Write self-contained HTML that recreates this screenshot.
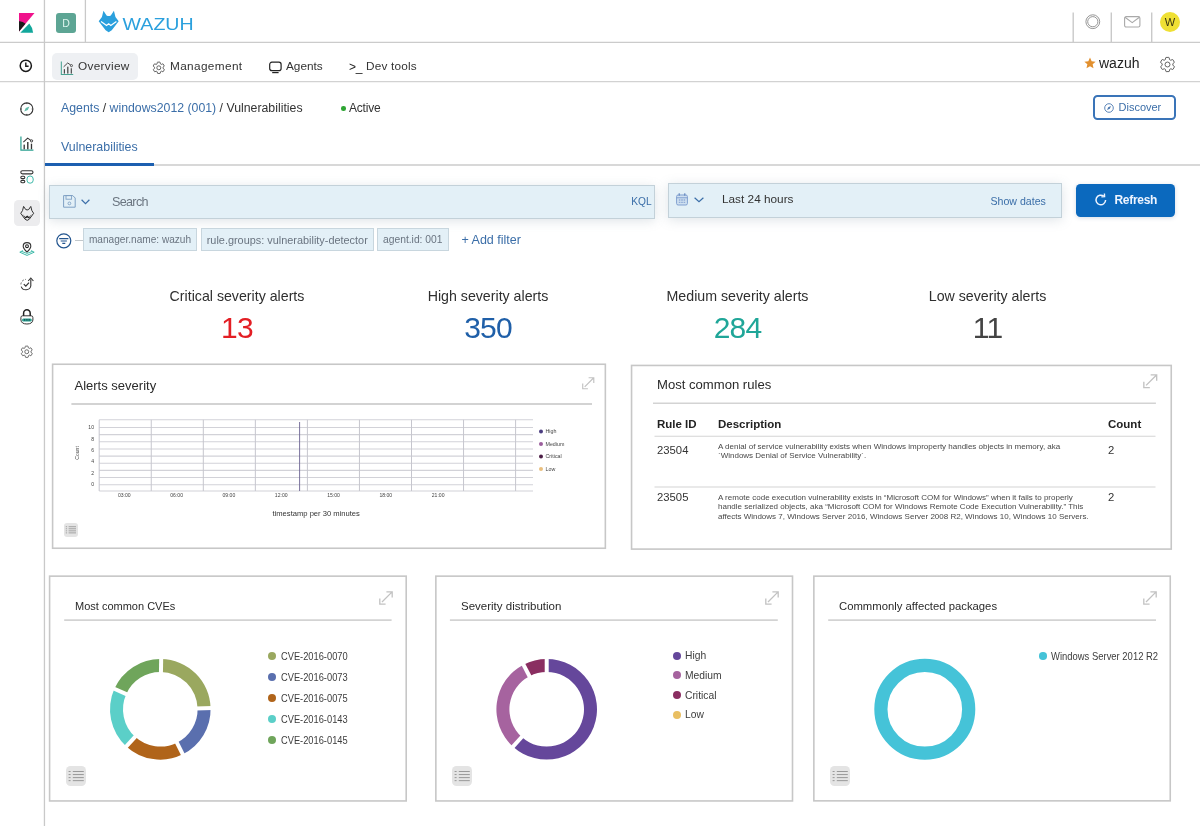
<!DOCTYPE html>
<html lang="en">
<head>
<meta charset="utf-8">
<title>Wazuh - Vulnerabilities</title>
<style>
*{box-sizing:border-box;margin:0;padding:0}
html,body{width:1200px;height:826px;overflow:hidden;background:#fff}
body{position:relative;will-change:transform;font-family:"Liberation Sans",sans-serif;color:#343741;font-size:13px}
.a{position:absolute;white-space:nowrap;line-height:1}
.ln{position:absolute;background:#d3d3d3}
svg{position:absolute;overflow:visible}
.blue{color:#3b6ea8}
.panel{position:absolute;border:2px solid #d6d6d6;background:transparent}
.ptitle{position:absolute;white-space:nowrap;line-height:1;color:#2a2a2a}
.pill{position:absolute;height:23px;top:228px;background:#e3f0f7;border:1px solid #c8d6de;color:#6a7480;font-size:10.300px;line-height:22px;white-space:nowrap;text-align:center}
.stat-l{position:absolute;width:250px;text-align:center;top:288.800px;font-size:14.200px;line-height:1;color:#2f2f2f;white-space:nowrap}
.stat-n{position:absolute;width:250px;text-align:center;top:313px;font-size:30px;letter-spacing:-0.800px;line-height:1;white-space:nowrap}
.lg{position:absolute;white-space:nowrap;line-height:1;color:#3d3d3d}
.dot{position:absolute;border-radius:50%}
</style>
</head>
<body>

<!-- ===== frame lines ===== -->
<svg style="left:0;top:0" width="1200" height="826" viewBox="0 0 1200 826">
<line x1="0" y1="42.400" x2="1200" y2="42.400" stroke="#cbcbcb" stroke-width="1.300"/>
<line x1="0" y1="81.700" x2="1200" y2="81.700" stroke="#d2d2d2" stroke-width="1.300"/>
<line x1="44.450" y1="0" x2="44.450" y2="826" stroke="#c9c9c9" stroke-width="1.300"/>
<line x1="85.400" y1="0" x2="85.400" y2="42" stroke="#c9c9c9" stroke-width="1.300"/>
<line x1="1073.200" y1="12.600" x2="1073.200" y2="42" stroke="#c9c9c9" stroke-width="1.400"/>
<line x1="1111.300" y1="12.600" x2="1111.300" y2="42" stroke="#c9c9c9" stroke-width="1.400"/>
<line x1="1151.700" y1="12.600" x2="1151.700" y2="42" stroke="#c9c9c9" stroke-width="1.400"/>
</svg>

<!-- ===== top bar ===== -->
<!-- kibana logo -->
<svg style="left:18.900px;top:13px" width="15.500" height="19.800" viewBox="0 0 15.5 19.8">
  <polygon points="0,0 15.500,0 0,18.400" fill="#f0128c"/>
  <path d="M0,8.200 Q3.600,7.900 6.500,10.700 L0,18.400 Z" fill="#1b1b1b"/>
  <path d="M1.300,19.700 L14.100,19.700 Q13.600,14.600 10.300,10.600 Z" fill="#12a79b"/>
</svg>
<!-- D badge -->
<div class="a" style="left:56px;top:13px;width:20px;height:19.5px;background:#5da594;border-radius:3px;color:#def5ee;font-size:10.500px;text-align:center;line-height:20px">D</div>
<!-- wazuh logo -->
<svg style="left:98.7px;top:11.2px" width="96" height="22" viewBox="0 0 96 22">
  <g transform="translate(-0.300,-0.300) scale(1.035)"><path d="M4.6,0 L7.6,4.6 Q9.65,5.6 11.7,4.6 L14.7,0 L16.2,6.2 L19.3,10.3 L12.6,19 L9.65,20.8 L6.7,19 L0,10.3 L3.1,6.2 Z" fill="#2ba0dd"/>
  <polyline points="2.200,10.400 7.600,14.300 9.650,12.700 11.700,14.300 17.100,10.400" fill="none" stroke="#fff" stroke-width="1.150" stroke-linejoin="miter"/></g>
  <text x="23.600" y="18.600" font-family="Liberation Sans, sans-serif" font-size="16.2" fill="#2ba0dd" textLength="71" lengthAdjust="spacingAndGlyphs">WAZUH</text>
</svg>

<!-- right icons -->
<svg style="left:1084.5px;top:14px" width="16" height="16" viewBox="0 0 16 16"><circle cx="7.8" cy="7.7" r="6.9" fill="none" stroke="#8a8a8a" stroke-width="0.9"/><circle cx="7.8" cy="7.7" r="5.1" fill="none" stroke="#8a8a8a" stroke-width="0.9"/></svg>
<svg style="left:1124px;top:16px" width="17" height="12" viewBox="0 0 17 12"><rect x="0.6" y="0.6" width="15.3" height="10.4" rx="1.6" fill="none" stroke="#a9a9a9" stroke-width="1.1"/><polyline points="1,1.2 8.2,6.6 15.4,1.2" fill="none" stroke="#a9a9a9" stroke-width="1.1"/></svg>
<div class="a" style="left:1160px;top:11.7px;width:20px;height:20px;border-radius:50%;background:#efe034;color:#3a3510;font-size:11px;text-align:center;line-height:20.500px">W</div>

<!-- ===== nav bar ===== -->
<svg style="left:19px;top:59px" width="14" height="14" viewBox="0 0 14 14"><circle cx="6.8" cy="6.8" r="5.6" fill="none" stroke="#1a1a1a" stroke-width="1.5"/><polyline points="6.8,3.6 6.8,7.2 9.6,7.2" fill="none" stroke="#1a1a1a" stroke-width="1.4"/></svg>
<div class="a" style="left:51.600px;top:52.800px;width:86px;height:27px;background:#eef0f3;border-radius:5px"></div>
<svg style="left:59.800px;top:60.500px" width="14.200" height="14.200" viewBox="0 0 15 16">
  <path d="M1,0.5 V15.2 H14.4" fill="none" stroke="#4aa392" stroke-width="1.2"/>
  <path d="M3.6,6.6 L8.2,2.2 L11.6,4.6" fill="none" stroke="#444" stroke-width="1.1"/>
  <circle cx="12.4" cy="5.2" r="1.2" fill="none" stroke="#444" stroke-width="1"/>
  <rect x="3.8" y="9.2" width="1.3" height="5" fill="#444"/><rect x="7.6" y="6.4" width="1.4" height="7.8" fill="#444"/><rect x="11.6" y="8.2" width="1.3" height="6" fill="#444"/>
</svg>
<div class="a" style="left:78px;top:61px;font-size:11.800px;letter-spacing:0.300px;color:#333">Overview</div>
<svg style="left:151.600px;top:60.800px" width="13.600" height="13.600" viewBox="0 0 24 24"><path d="M12 15.5A3.5 3.5 0 1 0 12 8.5a3.5 3.5 0 0 0 0 7zm7.4-2.5c.1-.3.1-.7.1-1s0-.7-.1-1l2.100-1.700c.2-.2.2-.4.100-.6l-2-3.500c-.1-.2-.400-.3-.600-.2l-2.500 1a7.300 7.300 0 0 0-1.700-1l-.400-2.600c0-.2-.200-.4-.500-.4h-4c-.200 0-.500.200-.500.400l-.400 2.600c-.600.300-1.200.600-1.700 1l-2.500-1c-.200-.1-.500 0-.600.200l-2 3.500c-.1.200-.1.500.100.600L4.600 11c0 .3-.100.700-.100 1s0 .7.100 1l-2.100 1.700c-.2.200-.2.400-.100.600l2 3.500c.1.200.400.300.600.200l2.500-1c.5.400 1.100.700 1.700 1l.4 2.600c0 .2.200.4.500.4h4c.2 0 .5-.2.500-.4l.4-2.600c.6-.3 1.200-.6 1.700-1l2.500 1c.2.100.5 0 .6-.2l2-3.500c.1-.2.100-.5-.1-.6L19.400 13z" fill="none" stroke="#555" stroke-width="1.6"/></svg>
<div class="a" style="left:170px;top:61px;font-size:11.800px;letter-spacing:0.360px;color:#333">Management</div>
<svg style="left:269px;top:61px" width="13" height="13" viewBox="0 0 13 13"><rect x="0.7" y="1.2" width="11.4" height="8.4" rx="2.2" fill="none" stroke="#222" stroke-width="1.2"/><line x1="3.2" y1="11.6" x2="9.6" y2="11.6" stroke="#222" stroke-width="1.2"/></svg>
<div class="a" style="left:286px;top:61px;font-size:11.800px;color:#333">Agents</div>
<div class="a" style="left:349px;top:61px;font-size:12px;letter-spacing:-0.300px;color:#222">&gt;_</div>
<div class="a" style="left:366px;top:60.500px;font-size:11.800px;letter-spacing:0.180px;color:#333">Dev tools</div>

<svg style="left:1084px;top:56.5px" width="12" height="12" viewBox="0 0 24 24"><path d="M12 1.200l3.300 7.300 8 .8-6 5.400 1.700 7.900L12 18.500 5 22.600l1.700-7.900-6-5.400 8-.8z" fill="#e2902f"/></svg>
<div class="a" style="left:1099px;top:55.5px;font-size:14px;color:#222">wazuh</div>
<svg style="left:1159px;top:55.5px" width="17" height="17" viewBox="0 0 24 24"><path d="M12 15.500A3.500 3.500 0 1 0 12 8.500a3.500 3.500 0 0 0 0 7zm7.400-2.500c.1-.3.100-.7.100-1s0-.7-.1-1l2.100-1.700c.2-.2.200-.4.100-.6l-2-3.500c-.1-.2-.4-.3-.6-.2l-2.500 1a7.300 7.300 0 0 0-1.700-1l-.4-2.600c0-.2-.2-.4-.5-.4h-4c-.2 0-.5.200-.5.400l-.4 2.600c-.6.300-1.200.6-1.700 1l-2.500-1c-.2-.1-.5 0-.6.200l-2 3.500c-.1.200-.1.500.1.600L4.600 11c0 .3-.1.700-.1 1s0 .7.100 1l-2.100 1.700c-.2.200-.2.400-.1.600l2 3.500c.1.200.4.300.6.200l2.500-1c.5.400 1.100.7 1.700 1l.4 2.600c0 .2.200.4.500.4h4c.2 0 .5-.2.500-.4l.4-2.600c.6-.3 1.200-.6 1.700-1l2.500 1c.2.100.5 0 .6-.2l2-3.500c.1-.2.100-.5-.1-.6L19.400 13z" fill="none" stroke="#555" stroke-width="1.3"/></svg>


<!-- ===== sidebar icons ===== -->
<!-- compass -->
<svg style="left:20px;top:102px" width="14" height="14" viewBox="0 0 14 14"><circle cx="6.8" cy="7" r="6.1" fill="none" stroke="#333" stroke-width="1.1"/><path d="M9.400,4.400 L7.800,8 L4.200,9.600 L5.800,6 Z" fill="#63bba9"/><path d="M6.8,0.9v1.2M6.8,11.9v1.2M0.700,7h1.200M11.700,7h1.200" stroke="#333" stroke-width="0.9"/></svg>
<!-- visualize -->
<svg style="left:20px;top:136px" width="14" height="15" viewBox="0 0 15 16">
  <path d="M1,0.5 V15.2 H14.4" fill="none" stroke="#2aa090" stroke-width="1.3"/>
  <path d="M3.6,6.6 L8.2,2.2 L11.6,4.6" fill="none" stroke="#333" stroke-width="1.1"/>
  <circle cx="12.4" cy="5.2" r="1.2" fill="none" stroke="#333" stroke-width="1"/>
  <rect x="3.8" y="9.2" width="1.4" height="5" fill="#333"/><rect x="7.600" y="6.400" width="1.500" height="7.800" fill="#333"/><rect x="11.600" y="8.200" width="1.400" height="6" fill="#333"/>
</svg>
<!-- dashboard -->
<svg style="left:20px;top:170px" width="14" height="14" viewBox="0 0 14 14"><rect x="0.8" y="0.7" width="12.2" height="3.2" rx="1.6" fill="none" stroke="#333" stroke-width="1.1"/><rect x="0.8" y="6.2" width="4" height="2.4" rx="1.2" fill="none" stroke="#333" stroke-width="1.1"/><rect x="0.8" y="10.4" width="4" height="2.400" rx="1.200" fill="none" stroke="#333" stroke-width="1.100"/><rect x="7" y="6" width="6.2" height="7.2" rx="3" fill="none" stroke="#35b5a4" stroke-width="0.950"/></svg>
<!-- wazuh selected -->
<div class="a" style="left:14px;top:200px;width:26px;height:26px;background:#ececee;border-radius:4.500px"></div>
<svg style="left:20.300px;top:206.400px" width="14.400" height="14.800" viewBox="0 0 19.3 20.8"><path d="M4.6,0.600 L7.6,5 Q9.650,6 11.700,5 L14.700,0.600 L16.200,6.400 L18.700,10.300 L12.600,18.600 L9.650,20.200 L6.700,18.600 L0.600,10.300 L3.100,6.400 Z" fill="none" stroke="#222" stroke-width="1.3" stroke-linejoin="round"/><path d="M3.500,11.500 L7,15.500 L9.650,13.300 L12.300,15.500 L15.800,11.500 L12.300,17.500 L9.650,16 L7,17.500 Z" fill="#222"/></svg>
<!-- maps -->
<svg style="left:19px;top:241.500px" width="16" height="14.500" viewBox="0 0 16 14.5"><path d="M8,0.600 C5.600,0.600 4.200,2.300 4.200,4.200 C4.200,6.400 8,10 8,10 C8,10 11.800,6.400 11.800,4.200 C11.800,2.300 10.400,0.600 8,0.600 Z" fill="none" stroke="#333" stroke-width="1.1"/><circle cx="8" cy="4.200" r="1.400" fill="none" stroke="#222" stroke-width="1.100"/><path d="M4,8.600 L0.800,10.200 L8,13.400 L15.200,10.200 L12,8.600" fill="none" stroke="#35b5a4" stroke-width="0.950"/><path d="M0.800,12 L8,14.300 L15.200,12" fill="none" stroke="#2aa090" stroke-width="0"/><path d="M2.600,9.400 L8,11.400 L13.400,9.400" fill="none" stroke="#35b5a4" stroke-width="0.900"/></svg>
<!-- uptime -->
<svg style="left:20px;top:276px" width="14" height="14.500" viewBox="0 0 14 14.5"><path d="M10.800,3.200 V10 A5,4.800 0 0 1 1.200,10.600" fill="none" stroke="#333" stroke-width="1.1"/><path d="M8.200,5 L10.800,2 L13.400,5" fill="none" stroke="#333" stroke-width="1.100"/><path d="M0.900,8.400 A5.200,5.200 0 0 1 6,3.400" fill="none" stroke="#666" stroke-width="1" stroke-dasharray="2 1.400"/><path d="M3.800,8.200 L5.800,10.200 L9,6.600" fill="none" stroke="#333" stroke-width="1.200"/></svg>
<!-- security -->
<svg style="left:20px;top:309px" width="14" height="16" viewBox="0 0 14 16"><path d="M3.600,7 V4.200 A3.300,3.400 0 0 1 10.200,4.200 V7" fill="none" stroke="#222" stroke-width="1.500"/><path d="M0.900,8.600 Q0.900,6.800 2.600,6.800 H11.200 Q12.900,6.800 12.900,8.600 V11 Q12.400,15 6.900,15 Q1.400,15 0.900,11 Z" fill="none" stroke="#333" stroke-width="1"/><rect x="2" y="9.400" width="9.800" height="3" rx="1.500" fill="#2aa090"/><path d="M4,10.900h1.200M6.300,10.900h1.200M8.600,10.900h1.200" stroke="#123" stroke-width="1"/></svg>
<!-- management -->
<svg style="left:19.500px;top:344.500px" width="13.500" height="13.500" viewBox="0 0 24 24"><path d="M12 15.500A3.500 3.500 0 1 0 12 8.500a3.500 3.500 0 0 0 0 7zm7.400-2.500c.1-.3.100-.7.100-1s0-.7-.1-1l2.100-1.700c.2-.2.200-.4.100-.6l-2-3.500c-.1-.2-.4-.3-.6-.2l-2.500 1a7.300 7.300 0 0 0-1.700-1l-.4-2.600c0-.2-.2-.4-.5-.4h-4c-.2 0-.5.200-.5.400l-.4 2.600c-.6.300-1.200.6-1.700 1l-2.500-1c-.2-.1-.5 0-.6.200l-2 3.500c-.1.200-.1.500.1.600L4.600 11c0 .3-.1.700-.1 1s0 .7.100 1l-2.100 1.700c-.2.200-.2.400-.1.600l2 3.500c.1.200.4.300.6.200l2.500-1c.5.400 1.100.7 1.700 1l.4 2.600c0 .2.200.4.500.4h4c.2 0 .5-.2.500-.4l.4-2.600c.6-.3 1.200-.6 1.700-1l2.500 1c.2.100.5 0 .6-.2l2-3.500c.1-.2.100-.5-.1-.6L19.400 13z" fill="none" stroke="#555" stroke-width="1.500"/></svg>



<!-- ===== breadcrumb ===== -->
<div class="a" style="left:61px;top:101.500px;font-size:12.300px;color:#333"><span class="blue">Agents</span> / <span class="blue">windows2012 (001)</span> / Vulnerabilities</div>
<div class="dot" style="left:341px;top:106px;width:4.500px;height:4.500px;background:#2fa534"></div>
<div class="a" style="left:349px;top:101.500px;font-size:12px;letter-spacing:-0.200px;color:#333">Active</div>
<!-- discover button -->
<div class="a" style="left:1093px;top:94.500px;width:83px;height:25.500px;border:2px solid #3a74b8;border-radius:4.500px;background:#fff"></div>
<svg style="left:1103.500px;top:102.500px" width="10" height="10" viewBox="0 0 10 10"><circle cx="5" cy="5" r="4.300" fill="none" stroke="#4a78b0" stroke-width="0.900"/><path d="M7,3 L5.800,5.800 L3,7 L4.200,4.200 Z" fill="#4a78b0"/></svg>
<div class="a" style="left:1118.500px;top:102px;font-size:11px;color:#3b6ea8">Discover</div>

<!-- ===== tabs ===== -->
<div class="a" style="left:61px;top:140.500px;font-size:12.400px;color:#3b6ea8">Vulnerabilities</div>
<div class="ln" style="left:45px;top:164px;width:1155px;height:2px;background:#d8d8d8"></div>
<div class="ln" style="left:45px;top:162.500px;width:109px;height:3.200px;background:#1c5fb0"></div>

<!-- ===== search bar ===== -->
<div class="a" style="left:49px;top:185px;width:606px;height:34px;background:#e3f0f7;border:1px solid #c3d1d9;box-shadow:0 2px 11px rgba(110,130,150,.22)"></div>
<svg style="left:62.500px;top:194.500px" width="13" height="13" viewBox="0 0 13 13"><path d="M0.600,0.600 H9.800 L12.200,3 V12.200 H0.600 Z" fill="none" stroke="#7ea0c4" stroke-width="1"/><rect x="3" y="0.600" width="5.600" height="3.600" fill="none" stroke="#7ea0c4" stroke-width="0.900"/><circle cx="6.400" cy="8.400" r="1.400" fill="none" stroke="#7ea0c4" stroke-width="0.900"/></svg>
<svg style="left:80.500px;top:198.500px" width="9" height="6" viewBox="0 0 9 6"><polyline points="0.600,0.800 4.500,4.600 8.400,0.800" fill="none" stroke="#3b6ea8" stroke-width="1.200"/></svg>
<div class="a" style="left:112px;top:195.800px;font-size:12.600px;letter-spacing:-0.680px;color:#6b7580">Search</div>
<div class="a" style="left:631.300px;top:196.600px;font-size:10.200px;color:#3b6ea8">KQL</div>

<!-- date picker -->
<div class="a" style="left:667.500px;top:183px;width:394px;height:34.500px;background:#e3f0f7;border:1px solid #c3d1d9;box-shadow:0 2px 11px rgba(110,130,150,.22)"></div>
<svg style="left:676px;top:193.300px" width="12" height="12.700" viewBox="0 0 12 12.700"><rect x="0.600" y="2" width="10.800" height="10" rx="1.500" fill="#cfe0f0" stroke="#7f9fd0" stroke-width="1"/><path d="M0.600,4.800H11.400" stroke="#7f9fd0" stroke-width="1"/><path d="M3.200,0.300V2.800M8.800,0.300V2.800" stroke="#5f83bd" stroke-width="1.100"/><path d="M2.800,7h6.400M2.800,9.400h6.400" stroke="#8fabd6" stroke-width="1.300" stroke-dasharray="1.600 0.800"/></svg>
<svg style="left:693.500px;top:197px" width="10" height="6" viewBox="0 0 10 6"><polyline points="0.600,0.800 5,4.800 9.400,0.800" fill="none" stroke="#3b6ea8" stroke-width="1.200"/></svg>
<div class="a" style="left:722px;top:193.500px;font-size:11.800px;color:#333">Last 24 hours</div>
<div class="a" style="left:990.500px;top:195.500px;font-size:10.600px;color:#3b6ea8">Show dates</div>

<!-- refresh button -->
<div class="a" style="left:1076px;top:183.500px;width:99px;height:33.500px;background:#0b69be;border-radius:4.500px;box-shadow:0 1px 4px rgba(20,60,120,.18)"></div>
<svg style="left:1095px;top:194px" width="12" height="12" viewBox="0 0 12 12"><path d="M10.600,6 A4.800,4.800 0 1 1 8.800,2.200" fill="none" stroke="#eef4ff" stroke-width="1.500"/><polyline points="6.400,2.900 9.600,2.700 9.400,-0.500" fill="none" stroke="#eef4ff" stroke-width="1.400"/></svg>
<div class="a" style="left:1114.500px;top:193.500px;font-size:12px;color:#eef4ff;font-weight:bold;letter-spacing:-0.300px">Refresh</div>

<!-- ===== filters ===== -->
<svg style="left:56px;top:232.500px" width="16" height="16" viewBox="0 0 16 16"><circle cx="7.800" cy="7.800" r="7" fill="none" stroke="#23558f" stroke-width="1.200"/><path d="M3.200,5.600h9.200M4.700,8h6.200M6.300,10.400h3" stroke="#23558f" stroke-width="1.200"/></svg>
<div class="ln" style="left:74.500px;top:239.500px;width:9px;height:1px;background:#c2c8cc"></div>
<div class="pill" style="left:83px;width:114px;font-size:10.100px">manager.name: wazuh</div>
<div class="pill" style="left:200.500px;width:173.500px;font-size:10.900px">rule.groups: vulnerability-detector</div>
<div class="pill" style="left:377px;width:71.500px">agent.id: 001</div>
<div class="a" style="left:461.500px;top:233.500px;font-size:12.500px;color:#3b6ea8">+ Add filter</div>

<!-- ===== stats ===== -->
<div class="stat-l" style="left:112px">Critical severity alerts</div>
<div class="stat-n" style="left:112px;color:#e31e24">13</div>
<div class="stat-l" style="left:363px">High severity alerts</div>
<div class="stat-n" style="left:363px;color:#1f5fa8">350</div>
<div class="stat-l" style="left:612.500px">Medium severity alerts</div>
<div class="stat-n" style="left:612.500px;color:#1fa698">284</div>
<div class="stat-l" style="left:862.500px">Low severity alerts</div>
<div class="stat-n" style="left:862.500px;color:#444">11</div>


<!-- ===== panel frames ===== -->
<svg style="left:0;top:0" width="1200" height="826" viewBox="0 0 1200 826">
<rect x="52.6" y="364.25" width="552.75" height="184.00" fill="none" stroke="#c7c7c7" stroke-width="1.6"/>
<rect x="631.55" y="365.45" width="539.70" height="183.65" fill="none" stroke="#c7c7c7" stroke-width="1.6"/>
<rect x="49.6" y="576.15" width="356.60" height="224.80" fill="none" stroke="#c7c7c7" stroke-width="1.6"/>
<rect x="435.85" y="576.15" width="356.65" height="224.80" fill="none" stroke="#c7c7c7" stroke-width="1.6"/>
<rect x="813.85" y="576.15" width="356.40" height="224.70" fill="none" stroke="#c7c7c7" stroke-width="1.6"/>
<line x1="71.4" y1="404" x2="592" y2="404" stroke="#d3d3d3" stroke-width="2.0"/>
<line x1="653" y1="403.25" x2="1155.9" y2="403.25" stroke="#d3d3d3" stroke-width="1.6"/>
<line x1="64.2" y1="620.15" x2="391.6" y2="620.15" stroke="#d3d3d3" stroke-width="1.7"/>
<line x1="449.9" y1="620.15" x2="777.8" y2="620.15" stroke="#d3d3d3" stroke-width="1.7"/>
<line x1="828.2" y1="620.15" x2="1156" y2="620.15" stroke="#d3d3d3" stroke-width="1.7"/>
<line x1="654.500" y1="436.200" x2="1155.500" y2="436.200" stroke="#d4d4d4" stroke-width="1.100"/>
<line x1="654.500" y1="487" x2="1155.500" y2="487" stroke="#d4d4d4" stroke-width="1.100"/>
</svg>
<!-- ===== Alerts severity panel ===== -->
<div class="ptitle" style="left:74.500px;top:379px;font-size:13px">Alerts severity</div>
<svg style="left:581.5px;top:377px" width="12.5" height="12.5" viewBox="0 0 14 14"><path d="M3,11 L12.600,1.400 M7.400,0.800 H13.200 V6.600 M0.800,7.400 V13.200 H6.600" fill="none" stroke="#c2c2c2" stroke-width="1.300"/></svg>
<div class="a" style="left:64px;top:523px;width:13.500px;height:13.500px;background:#e4e4e4;border-radius:3px"></div><svg style="left:64px;top:523px" width="13.500" height="13.500" viewBox="0 0 20 20"><path d="M2.600,5.500h2M2.600,8.550h2M2.600,11.600h2M2.600,14.650h2M6.800,5.500h11M6.800,8.550h11M6.800,11.600h11M6.800,14.650h11" stroke="#999" stroke-width="1.300"/></svg>
<svg style="left:0;top:0" width="1200" height="826" viewBox="0 0 1200 826" font-family="Liberation Sans, sans-serif">
<line x1="99.2" y1="419.80" x2="533" y2="419.80" stroke="#d2d2d8" stroke-width="1.100"/>
<line x1="99.2" y1="427.50" x2="533" y2="427.50" stroke="#d2d2d8" stroke-width="1.100"/>
<line x1="99.2" y1="434.65" x2="533" y2="434.65" stroke="#d2d2d8" stroke-width="1.100"/>
<line x1="99.2" y1="441.80" x2="533" y2="441.80" stroke="#d2d2d8" stroke-width="1.100"/>
<line x1="99.2" y1="448.95" x2="533" y2="448.95" stroke="#d2d2d8" stroke-width="1.100"/>
<line x1="99.2" y1="456.10" x2="533" y2="456.10" stroke="#d2d2d8" stroke-width="1.100"/>
<line x1="99.2" y1="463.25" x2="533" y2="463.25" stroke="#d2d2d8" stroke-width="1.100"/>
<line x1="99.2" y1="470.40" x2="533" y2="470.40" stroke="#d2d2d8" stroke-width="1.100"/>
<line x1="99.2" y1="477.55" x2="533" y2="477.55" stroke="#d2d2d8" stroke-width="1.100"/>
<line x1="99.2" y1="484.70" x2="533" y2="484.70" stroke="#d2d2d8" stroke-width="1.100"/>
<line x1="99.2" y1="491.00" x2="533" y2="491.00" stroke="#d2d2d8" stroke-width="1.100"/>
<line x1="99.20" y1="419.800" x2="99.20" y2="491" stroke="#c6c6ce" stroke-width="1"/>
<line x1="151.25" y1="419.800" x2="151.25" y2="491" stroke="#c6c6ce" stroke-width="1"/>
<line x1="203.30" y1="419.800" x2="203.30" y2="491" stroke="#c6c6ce" stroke-width="1"/>
<line x1="255.35" y1="419.800" x2="255.35" y2="491" stroke="#c6c6ce" stroke-width="1"/>
<line x1="307.40" y1="419.800" x2="307.40" y2="491" stroke="#c6c6ce" stroke-width="1"/>
<line x1="359.45" y1="419.800" x2="359.45" y2="491" stroke="#c6c6ce" stroke-width="1"/>
<line x1="411.50" y1="419.800" x2="411.50" y2="491" stroke="#c6c6ce" stroke-width="1"/>
<line x1="463.55" y1="419.800" x2="463.55" y2="491" stroke="#c6c6ce" stroke-width="1"/>
<line x1="515.60" y1="419.800" x2="515.60" y2="491" stroke="#c6c6ce" stroke-width="1"/>
<line x1="299.600" y1="422" x2="299.600" y2="491" stroke="#6a6292" stroke-width="0.900"/>
<text x="94" y="429.10" text-anchor="end" font-size="5.100" fill="#444">10</text>
<text x="94" y="440.54" text-anchor="end" font-size="5.100" fill="#444">8</text>
<text x="94" y="451.98" text-anchor="end" font-size="5.100" fill="#444">6</text>
<text x="94" y="463.42" text-anchor="end" font-size="5.100" fill="#444">4</text>
<text x="94" y="474.86" text-anchor="end" font-size="5.100" fill="#444">2</text>
<text x="94" y="486.30" text-anchor="end" font-size="5.100" fill="#444">0</text>
<text x="124.30" y="497.300" text-anchor="middle" font-size="5.100" fill="#444">03:00</text>
<text x="176.60" y="497.300" text-anchor="middle" font-size="5.100" fill="#444">06:00</text>
<text x="228.90" y="497.300" text-anchor="middle" font-size="5.100" fill="#444">09:00</text>
<text x="281.20" y="497.300" text-anchor="middle" font-size="5.100" fill="#444">12:00</text>
<text x="333.50" y="497.300" text-anchor="middle" font-size="5.100" fill="#444">15:00</text>
<text x="385.80" y="497.300" text-anchor="middle" font-size="5.100" fill="#444">18:00</text>
<text x="438.10" y="497.300" text-anchor="middle" font-size="5.100" fill="#444">21:00</text>
<text transform="translate(79,453) rotate(-90)" text-anchor="middle" font-size="5.100" fill="#444">Count</text>
<circle cx="541" cy="431.500" r="2" fill="#4b3d80"/><text x="545.500" y="433.100" font-size="5.300" fill="#444">High</text>
<circle cx="541" cy="444" r="2" fill="#9b5e9c"/><text x="545.500" y="445.600" font-size="5.300" fill="#444">Medium</text>
<circle cx="541" cy="456.500" r="2" fill="#4c1e46"/><text x="545.500" y="458.100" font-size="5.300" fill="#444">Critical</text>
<circle cx="541" cy="469" r="2" fill="#e9bf7e"/><text x="545.500" y="470.600" font-size="5.300" fill="#444">Low</text>
<text x="316.200" y="516" text-anchor="middle" font-size="7.600" fill="#333">timestamp per 30 minutes</text>
</svg>

<!-- ===== Most common rules panel ===== -->
<div class="ptitle" style="left:657px;top:378px;font-size:13.100px">Most common rules</div>
<svg style="left:1143px;top:374px" width="14.5" height="14.5" viewBox="0 0 14 14"><path d="M3,11 L12.600,1.400 M7.400,0.800 H13.200 V6.600 M0.800,7.400 V13.200 H6.600" fill="none" stroke="#c2c2c2" stroke-width="1.300"/></svg>
<div class="a" style="left:657px;top:418.500px;font-size:11.500px;font-weight:bold;color:#222">Rule ID</div>
<div class="a" style="left:718px;top:418.500px;font-size:11.500px;font-weight:bold;color:#222">Description</div>
<div class="a" style="left:1108px;top:418.500px;font-size:11.500px;font-weight:bold;color:#222">Count</div>
<div class="a" style="left:657px;top:444.500px;font-size:11.300px;color:#333">23504</div>
<div class="a" style="left:718px;top:441.500px;font-size:8px;line-height:9.800px;color:#484848;white-space:nowrap;width:400px">A denial of service vulnerability exists when Windows improperty handles objects in memory, aka<br>`Windows Denial of Service Vulnerability´.</div>
<div class="a" style="left:1108px;top:444.500px;font-size:11.300px;color:#333">2</div>
<div class="a" style="left:657px;top:491.500px;font-size:11.300px;color:#333">23505</div>
<div class="a" style="left:718px;top:492.500px;font-size:8px;line-height:9.800px;color:#484848;white-space:nowrap;width:400px">A remote code execution vulnerability exists in “Microsoft COM for Windows” when it fails to properly<br>handle serialized objects, aka “Microsoft COM for Windows Remote Code Execution Vulnerability.” This<br>affects Windows 7, Windows Server 2016, Windows Server 2008 R2, Windows 10, Windows 10 Servers.</div>
<div class="a" style="left:1108px;top:491.500px;font-size:11.300px;color:#333">2</div>

<!-- ===== Most common CVEs ===== -->
<div class="ptitle" style="left:75px;top:601.200px;font-size:11px">Most common CVEs</div>
<svg style="left:378.5px;top:591px" width="14" height="14" viewBox="0 0 14 14"><path d="M3,11 L12.600,1.400 M7.400,0.800 H13.200 V6.600 M0.800,7.400 V13.200 H6.600" fill="none" stroke="#c2c2c2" stroke-width="1.300"/></svg>
<div class="a" style="left:65.5px;top:766px;width:20px;height:20px;background:#e4e4e4;border-radius:4.500px"></div><svg style="left:65.5px;top:766px" width="20" height="20" viewBox="0 0 20 20"><path d="M2.600,5.500h2M2.600,8.550h2M2.600,11.600h2M2.600,14.650h2M6.800,5.500h11M6.800,8.550h11M6.800,11.600h11M6.800,14.650h11" stroke="#999" stroke-width="1"/></svg>
<svg style="left:0;top:0" width="1200" height="826" viewBox="0 0 1200 826">
<path d="M161.18,659.01 A50.3,50.3 0 0 1 210.58,707.98 L197.59,708.32 A37.3,37.3 0 0 0 160.95,672.01 Z" fill="#9aa85f"/>
<path d="M210.58,707.98 A50.3,50.3 0 0 1 182.74,754.32 L176.94,742.68 A37.3,37.3 0 0 0 197.59,708.32 Z" fill="#5a6fae"/>
<path d="M182.74,754.32 A50.3,50.3 0 0 1 126.32,746.39 L135.10,736.80 A37.3,37.3 0 0 0 176.94,742.68 Z" fill="#b0641a"/>
<path d="M126.32,746.39 A50.3,50.3 0 0 1 114.35,688.84 L126.22,694.13 A37.3,37.3 0 0 0 135.10,736.80 Z" fill="#5bcfc8"/>
<path d="M114.35,688.84 A50.3,50.3 0 0 1 161.18,659.01 L160.95,672.01 A37.3,37.3 0 0 0 126.22,694.13 Z" fill="#6fa55b"/>
<line x1="160.92" y1="674.01" x2="161.21" y2="657.01" stroke="#fff" stroke-width="4.0"/>
<line x1="195.59" y1="708.38" x2="212.58" y2="707.93" stroke="#fff" stroke-width="4.0"/>
<line x1="176.05" y1="740.89" x2="183.64" y2="756.11" stroke="#fff" stroke-width="4.0"/>
<line x1="136.45" y1="735.33" x2="124.97" y2="747.86" stroke="#fff" stroke-width="4.0"/>
<line x1="128.05" y1="694.94" x2="112.52" y2="688.03" stroke="#fff" stroke-width="4.0"/>
<path d="M546.70,659.00 A50.3,50.3 0 1 1 513.04,746.68 L521.74,737.02 A37.3,37.3 0 1 0 546.70,672.00 Z" fill="#65479b"/>
<path d="M513.04,746.68 A50.3,50.3 0 0 1 523.47,664.68 L529.48,676.21 A37.3,37.3 0 0 0 521.74,737.02 Z" fill="#a6639f"/>
<path d="M523.47,664.68 A50.3,50.3 0 0 1 546.70,659.00 L546.70,672.00 A37.3,37.3 0 0 0 529.48,676.21 Z" fill="#8a2e61"/>
<line x1="546.70" y1="674.00" x2="546.70" y2="657.00" stroke="#fff" stroke-width="4.0"/>
<line x1="523.08" y1="735.53" x2="511.70" y2="748.17" stroke="#fff" stroke-width="4.0"/>
<line x1="530.40" y1="677.99" x2="522.55" y2="662.91" stroke="#fff" stroke-width="4.0"/>
<circle cx="924.800" cy="709.3" r="43.90" fill="none" stroke="#45c3d8" stroke-width="13.20"/>
</svg>
<div class="dot" style="left:268px;top:652px;width:8px;height:8px;background:#9aa85f"></div><div class="lg" style="left:280.500px;top:652.000px;font-size:10.200px;transform:scaleX(0.912);transform-origin:0 0">CVE-2016-0070</div>
<div class="dot" style="left:268px;top:673px;width:8px;height:8px;background:#5a6fae"></div><div class="lg" style="left:280.500px;top:673.000px;font-size:10.200px;transform:scaleX(0.912);transform-origin:0 0">CVE-2016-0073</div>
<div class="dot" style="left:268px;top:694px;width:8px;height:8px;background:#b0641a"></div><div class="lg" style="left:280.500px;top:694.000px;font-size:10.200px;transform:scaleX(0.912);transform-origin:0 0">CVE-2016-0075</div>
<div class="dot" style="left:268px;top:714.500px;width:8px;height:8px;background:#5bcfc8"></div><div class="lg" style="left:280.500px;top:714.500px;font-size:10.200px;transform:scaleX(0.912);transform-origin:0 0">CVE-2016-0143</div>
<div class="dot" style="left:268px;top:735.500px;width:8px;height:8px;background:#6fa55b"></div><div class="lg" style="left:280.500px;top:735.500px;font-size:10.200px;transform:scaleX(0.912);transform-origin:0 0">CVE-2016-0145</div>

<!-- ===== Severity distribution ===== -->
<div class="ptitle" style="left:461px;top:601.200px;font-size:11.500px">Severity distribution</div>
<svg style="left:764.5px;top:591px" width="14" height="14" viewBox="0 0 14 14"><path d="M3,11 L12.600,1.400 M7.400,0.800 H13.200 V6.600 M0.800,7.400 V13.200 H6.600" fill="none" stroke="#c2c2c2" stroke-width="1.300"/></svg>
<div class="a" style="left:451.5px;top:766px;width:20px;height:20px;background:#e4e4e4;border-radius:4.500px"></div><svg style="left:451.5px;top:766px" width="20" height="20" viewBox="0 0 20 20"><path d="M2.600,5.500h2M2.600,8.550h2M2.600,11.600h2M2.600,14.650h2M6.800,5.500h11M6.800,8.550h11M6.800,11.600h11M6.800,14.650h11" stroke="#999" stroke-width="1"/></svg>
<div class="dot" style="left:672.500px;top:651.500px;width:8px;height:8px;background:#65479b"></div><div class="lg" style="left:685px;top:650.300px;font-size:11px;transform:scaleX(0.936);transform-origin:0 0">High</div>
<div class="dot" style="left:672.500px;top:671px;width:8px;height:8px;background:#a6639f"></div><div class="lg" style="left:685px;top:669.800px;font-size:11px;transform:scaleX(0.936);transform-origin:0 0">Medium</div>
<div class="dot" style="left:672.500px;top:691px;width:8px;height:8px;background:#8a2e61"></div><div class="lg" style="left:685px;top:689.800px;font-size:11px;transform:scaleX(0.936);transform-origin:0 0">Critical</div>
<div class="dot" style="left:672.500px;top:710.500px;width:8px;height:8px;background:#e9bf62"></div><div class="lg" style="left:685px;top:709.300px;font-size:11px;transform:scaleX(0.936);transform-origin:0 0">Low</div>

<!-- ===== Commonly affected packages ===== -->
<div class="ptitle" style="left:839px;top:601.200px;font-size:11.300px">Commmonly affected packages</div>
<svg style="left:1143px;top:591px" width="14" height="14" viewBox="0 0 14 14"><path d="M3,11 L12.600,1.400 M7.400,0.800 H13.200 V6.600 M0.800,7.400 V13.200 H6.600" fill="none" stroke="#c2c2c2" stroke-width="1.300"/></svg>
<div class="a" style="left:830px;top:766px;width:20px;height:20px;background:#e4e4e4;border-radius:4.500px"></div><svg style="left:830px;top:766px" width="20" height="20" viewBox="0 0 20 20"><path d="M2.600,5.500h2M2.600,8.550h2M2.600,11.600h2M2.600,14.650h2M6.800,5.500h11M6.800,8.550h11M6.800,11.600h11M6.800,14.650h11" stroke="#999" stroke-width="1"/></svg>
<div class="dot" style="left:1039px;top:652px;width:7.500px;height:7.500px;background:#45c3d8"></div><div class="lg" style="left:1051px;top:651.500px;font-size:10.200px;transform:scaleX(0.927);transform-origin:0 0">Windows Server 2012 R2</div>



</body>
</html>
